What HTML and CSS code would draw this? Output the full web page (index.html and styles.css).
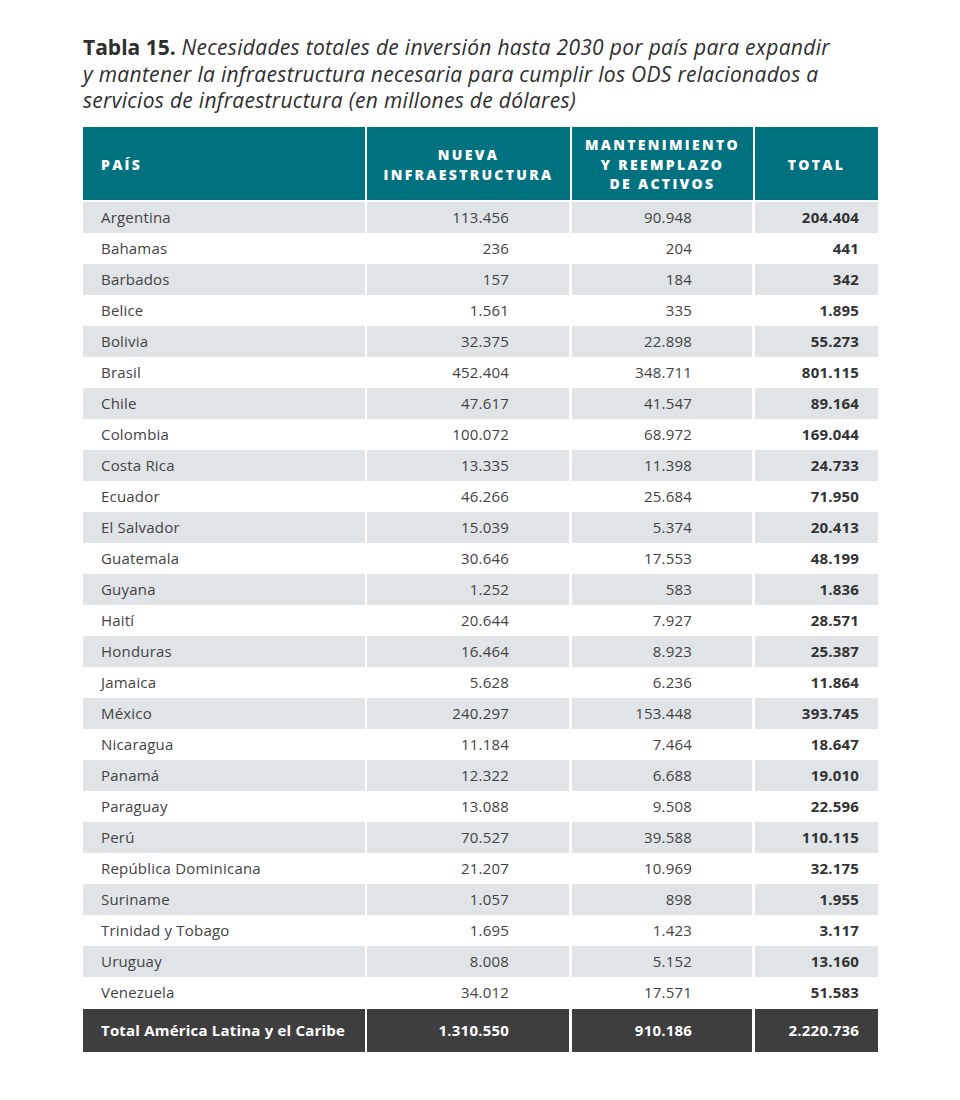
FILE: index.html
```html
<!DOCTYPE html>
<html lang="es">
<head>
<meta charset="utf-8">
<title>Tabla 15</title>
<link rel="stylesheet" href="styles.css">
</head>
<body>
<div class="page">
  <h1 class="title"><strong>Tabla 15.</strong> <em>Necesidades totales de inversión hasta 2030 por país para expandir<br>y mantener la infraestructura necesaria para cumplir los ODS relacionados a<br>servicios de infraestructura (en millones de dólares)</em></h1>
  <table class="data">
    <colgroup>
      <col class="c1"><col class="c2"><col class="c3"><col class="c4">
    </colgroup>
    <thead>
      <tr>
        <th class="left">PAÍS</th>
        <th>NUEVA<br>INFRAESTRUCTURA</th>
        <th>MANTENIMIENTO<br>Y REEMPLAZO<br>DE ACTIVOS</th>
        <th>TOTAL</th>
      </tr>
    </thead>
    <tbody>
      <tr><td>Argentina</td><td>113.456</td><td>90.948</td><td>204.404</td></tr>
      <tr><td>Bahamas</td><td>236</td><td>204</td><td>441</td></tr>
      <tr><td>Barbados</td><td>157</td><td>184</td><td>342</td></tr>
      <tr><td>Belice</td><td>1.561</td><td>335</td><td>1.895</td></tr>
      <tr><td>Bolivia</td><td>32.375</td><td>22.898</td><td>55.273</td></tr>
      <tr><td>Brasil</td><td>452.404</td><td>348.711</td><td>801.115</td></tr>
      <tr><td>Chile</td><td>47.617</td><td>41.547</td><td>89.164</td></tr>
      <tr><td>Colombia</td><td>100.072</td><td>68.972</td><td>169.044</td></tr>
      <tr><td>Costa Rica</td><td>13.335</td><td>11.398</td><td>24.733</td></tr>
      <tr><td>Ecuador</td><td>46.266</td><td>25.684</td><td>71.950</td></tr>
      <tr><td>El Salvador</td><td>15.039</td><td>5.374</td><td>20.413</td></tr>
      <tr><td>Guatemala</td><td>30.646</td><td>17.553</td><td>48.199</td></tr>
      <tr><td>Guyana</td><td>1.252</td><td>583</td><td>1.836</td></tr>
      <tr><td>Haití</td><td>20.644</td><td>7.927</td><td>28.571</td></tr>
      <tr><td>Honduras</td><td>16.464</td><td>8.923</td><td>25.387</td></tr>
      <tr><td>Jamaica</td><td>5.628</td><td>6.236</td><td>11.864</td></tr>
      <tr><td>México</td><td>240.297</td><td>153.448</td><td>393.745</td></tr>
      <tr><td>Nicaragua</td><td>11.184</td><td>7.464</td><td>18.647</td></tr>
      <tr><td>Panamá</td><td>12.322</td><td>6.688</td><td>19.010</td></tr>
      <tr><td>Paraguay</td><td>13.088</td><td>9.508</td><td>22.596</td></tr>
      <tr><td>Perú</td><td>70.527</td><td>39.588</td><td>110.115</td></tr>
      <tr><td>República Dominicana</td><td>21.207</td><td>10.969</td><td>32.175</td></tr>
      <tr><td>Suriname</td><td>1.057</td><td>898</td><td>1.955</td></tr>
      <tr><td>Trinidad y Tobago</td><td>1.695</td><td>1.423</td><td>3.117</td></tr>
      <tr><td>Uruguay</td><td>8.008</td><td>5.152</td><td>13.160</td></tr>
      <tr><td>Venezuela</td><td>34.012</td><td>17.571</td><td>51.583</td></tr>
    </tbody>
    <tfoot>
      <tr><td>Total América Latina y el Caribe</td><td>1.310.550</td><td>910.186</td><td>2.220.736</td></tr>
    </tfoot>
  </table>
</div>
</body>
</html>
```

FILE: styles.css
```css
html, body {
  margin: 0;
  padding: 0;
  background: #ffffff;
}

.page {
  padding: 34px 0 0 83px;
  font-family: "Open Sans", "Liberation Sans", sans-serif;
  color: #3b3b3b;
}

.title {
  margin: 0 0 13px 0;
  font-size: 21px;
  line-height: 26.5px;
  font-weight: normal;
  color: #2e2e2e;
  letter-spacing: 0.3px;
  white-space: nowrap;
}

.title strong {
  font-weight: 700;
  letter-spacing: 0;
}

.title em {
  font-style: italic;
}

.data {
  border-collapse: separate;
  border-spacing: 0;
  table-layout: fixed;
  width: 795px;
  font-size: 15px;
  letter-spacing: 0.2px;
}

.c1 { width: 284px; }
.c2 { width: 205px; }
.c3 { width: 183px; }
.c4 { width: 123px; }

.data th {
  background: #00717f;
  color: #ffffff;
  font-weight: 800;
  font-size: 14px;
  letter-spacing: 2.3px;
  line-height: 19.5px;
  height: 75px;
  padding: 3px 0 0 0;
  text-align: center;
  border-right: 2px solid #ffffff;
  border-bottom: 2px solid #ffffff;
  box-sizing: border-box;
}

.data th.left {
  text-align: left;
  padding-left: 18px;
}

.data th:last-child,
.data td:last-child {
  border-right: none;
}

.data td {
  height: 31px;
  padding: 0;
  border-right: 3px solid #ffffff;
  text-align: right;
  color: #434343;
  box-sizing: border-box;
}

.data td:first-child {
  text-align: left;
  padding-left: 18px;
  border-right-width: 2px;
}

.data td:nth-child(2) { padding-right: 60px; }
.data td:nth-child(3) { padding-right: 60px; }
.data td:nth-child(4) { padding-right: 19px; font-weight: 700; color: #333333; }

.data tbody tr:nth-child(odd) td {
  background: #e1e4e6;
}

.data tfoot td {
  background: #3e3e3e;
  color: #ffffff;
  font-weight: 700;
  height: 44px;
  border-top: 1px solid #ffffff;
}

.data tfoot td:nth-child(4) {
  color: #ffffff;
}
```
